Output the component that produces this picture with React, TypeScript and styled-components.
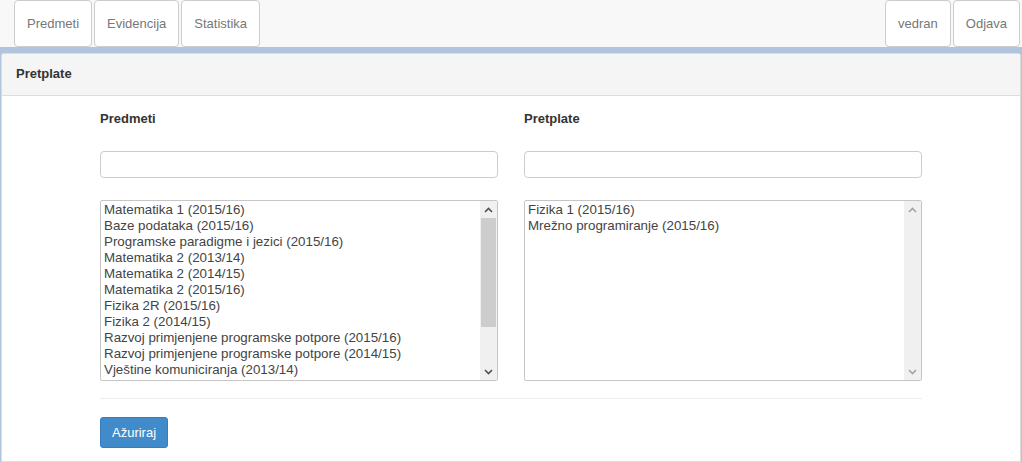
import React, { useState } from 'react'
import styled, { createGlobalStyle } from 'styled-components'

const GlobalStyle = createGlobalStyle`
    html, body {
        margin: 0;
        padding: 0;
        background: #b0c4de;
        font-family: "Liberation Sans", Arial, sans-serif;
        font-size: 13px;
        color: #333;
    }
    * {
        box-sizing: border-box;
    }
`

const subjects = [
    'Matematika 1 (2015/16)',
    'Baze podataka (2015/16)',
    'Programske paradigme i jezici (2015/16)',
    'Matematika 2 (2013/14)',
    'Matematika 2 (2014/15)',
    'Matematika 2 (2015/16)',
    'Fizika 2R (2015/16)',
    'Fizika 2 (2014/15)',
    'Razvoj primjenjene programske potpore (2015/16)',
    'Razvoj primjenjene programske potpore (2014/15)',
    'Vještine komuniciranja (2013/14)',
    'Arhitektura računala (2014/15)',
    'Operacijski sustavi (2015/16)',
    'Fizika 1 (2015/16)',
    'Mrežno programiranje (2015/16)',
]

const subscribed = ['Fizika 1 (2015/16)', 'Mrežno programiranje (2015/16)']

const Chevron = ({ up, color }: { up?: boolean; color: string }) => (
    <svg width="9" height="6" viewBox="0 0 9 6">
        <path
            d={up ? 'M1 5 L4.5 1.5 L8 5' : 'M1 1 L4.5 4.5 L8 1'}
            fill="none"
            stroke={color}
            strokeWidth="1.6"
        />
    </svg>
)

const ListBox = ({ items }: { items: string[] }) => {
    const visible = 11.25
    const scrollable = items.length > visible
    const arrowColor = scrollable ? '#505050' : '#a3a3a3'
    const thumb = scrollable ? Math.round((visible / items.length) * 145) : 0

    return (
        <Box>
            <Options>
                {items.map((i) => (
                    <Option key={i}>{i}</Option>
                ))}
            </Options>
            <Scrollbar>
                <ScrollButton>
                    <Chevron up color={arrowColor} />
                </ScrollButton>
                <Track>{scrollable && <Thumb style={{ height: thumb }} />}</Track>
                <ScrollButton>
                    <Chevron color={arrowColor} />
                </ScrollButton>
            </Scrollbar>
        </Box>
    )
}

const App = () => {
    const [search, setSearch] = useState('')
    const [filter, setFilter] = useState('')

    return (
        <>
            <GlobalStyle />
            <Navbar>
                <NavGroup>
                    <NavButton>Predmeti</NavButton>
                    <NavButton>Evidencija</NavButton>
                    <NavButton>Statistika</NavButton>
                </NavGroup>
                <NavGroup>
                    <NavButton>vedran</NavButton>
                    <NavButton>Odjava</NavButton>
                </NavGroup>
            </Navbar>
            <Main>
                <Panel>
                    <PanelHeading>Pretplate</PanelHeading>
                    <PanelBody>
                        <Form>
                            <Columns>
                                <Column>
                                    <Label>Predmeti</Label>
                                    <Input value={search} onChange={(e) => setSearch(e.target.value)} />
                                    <ListBox items={subjects} />
                                </Column>
                                <Column>
                                    <Label>Pretplate</Label>
                                    <Input value={filter} onChange={(e) => setFilter(e.target.value)} />
                                    <ListBox items={subscribed} />
                                </Column>
                            </Columns>
                            <Divider />
                            <PrimaryButton>Ažuriraj</PrimaryButton>
                        </Form>
                    </PanelBody>
                </Panel>
            </Main>
        </>
    )
}

const Navbar = styled.div`
    height: 47px;
    background: #f8f8f8;
    display: flex;
    justify-content: space-between;
    padding: 0 2px 0 14px;
`

const NavGroup = styled.div`
    display: flex;
    gap: 2px;
`

const NavButton = styled.button`
    height: 47px;
    padding: 0 12px;
    background: #fff;
    border: 1px solid #ccc;
    border-radius: 4px;
    color: #777;
    font-family: "Liberation Sans", Arial, sans-serif;
    font-size: 13px;
    cursor: pointer;
`

const Main = styled.div`
    padding: 6px 1px 0 1px;
`

const Panel = styled.div`
    background: #fff;
    border: 1px solid #ddd;
    border-radius: 3px 3px 0 0;
    height: 409px;
    overflow: hidden;
`

const PanelHeading = styled.div`
    height: 42px;
    display: flex;
    align-items: center;
    padding: 0 14px 2px;
    background: #f5f5f5;
    border-bottom: 1px solid #ddd;
    font-weight: bold;
    font-size: 13px;
    color: #333;
`

const PanelBody = styled.div`
    padding: 14px 15px 13px;
`

const Form = styled.div`
    width: 822px;
    margin: 0 auto;
`

const Columns = styled.div`
    display: grid;
    grid-template-columns: 398px 398px;
    gap: 26px;
`

const Column = styled.div`
    display: flex;
    flex-direction: column;
`

const Label = styled.div`
    font-weight: bold;
    font-size: 13px;
    line-height: 18px;
    color: #333;
`

const Input = styled.input`
    margin-top: 23px;
    height: 27px;
    width: 100%;
    border: 1px solid #ccc;
    border-radius: 4px;
    padding: 0 6px;
    font-family: "Liberation Sans", Arial, sans-serif;
    font-size: 13px;
    color: #555;
    outline: none;
`

const Box = styled.div`
    margin-top: 22px;
    height: 181px;
    border: 1px solid #c6c6c6;
    border-radius: 2px;
    display: flex;
    background: #fff;
    overflow: hidden;
`

const Options = styled.div`
    flex: 1;
    overflow: hidden;
    padding-top: 1px;
`

const Option = styled.div`
    font-family: "Liberation Sans", Arial, sans-serif;
    font-size: 13.33px;
    line-height: 16px;
    color: #444;
    padding: 0 3px;
    white-space: nowrap;
`

const Scrollbar = styled.div`
    width: 17px;
    display: flex;
    flex-direction: column;
    background: #f0f0f0;
`

const ScrollButton = styled.div`
    height: 17px;
    display: flex;
    align-items: center;
    justify-content: center;
`

const Track = styled.div`
    flex: 1;
    display: flex;
    justify-content: center;
`

const Thumb = styled.div`
    width: 15px;
    background: #cdcdcd;
`

const Divider = styled.div`
    margin-top: 17px;
    border-top: 1px solid #eee;
`

const PrimaryButton = styled.button`
    margin-top: 18px;
    height: 31px;
    padding: 0 11px;
    background: #428bca;
    border: 1px solid #357ebd;
    border-radius: 3px;
    color: #fff;
    font-family: "Liberation Sans", Arial, sans-serif;
    font-size: 13px;
    cursor: pointer;
`

export default App
